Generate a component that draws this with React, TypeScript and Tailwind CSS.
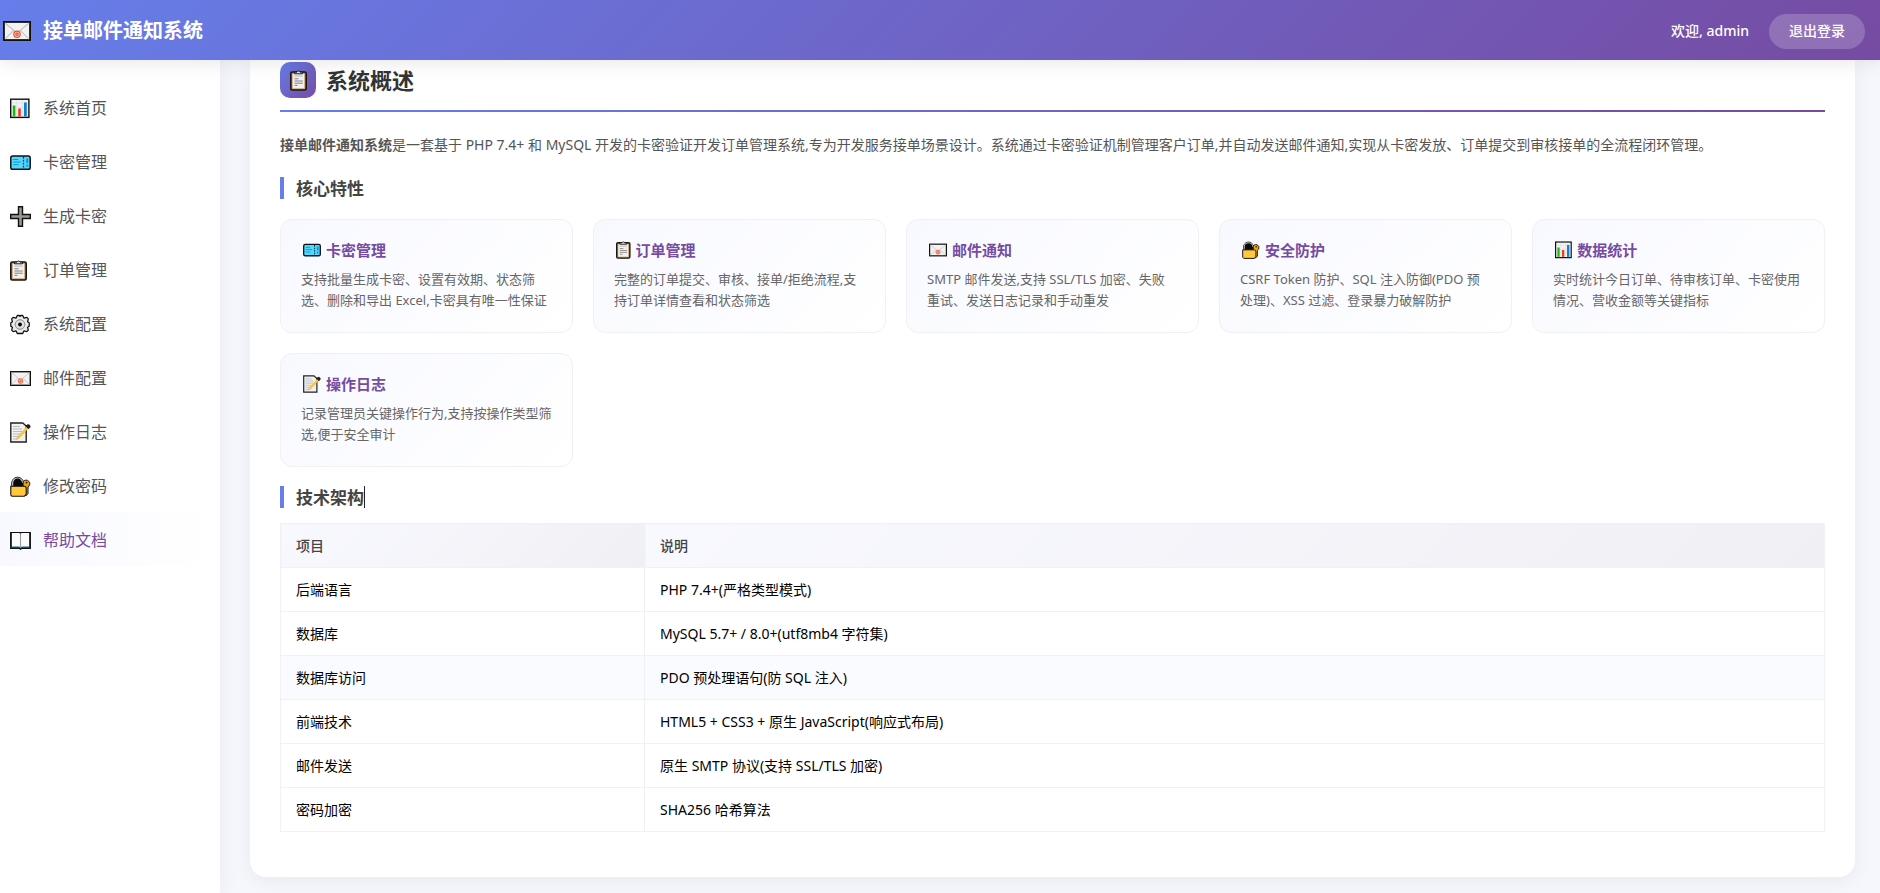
import type { ReactNode } from 'react'
import { clsx } from 'clsx'

type IconName = 'chart' | 'ticket' | 'plus' | 'clipboard' | 'gear' | 'mail' | 'memo' | 'lock' | 'book'

// every drawing is 21 units high, the width follows its own outline
const icons: Record<IconName, { width: number; art: ReactNode }> = {
  chart: {
    width: 20,
    art: (
      <>
        <rect x="0.7" y="1.2" width="18.2" height="18.2" fill="#f3f3f3" stroke="#111" strokeWidth="1.4" />
        <path d="M2 5h16M2 9.500h16M2 14h16M6.500 2v16M12.500 2v16" stroke="#dcdcdc" strokeWidth="0.6" />
        <rect x="2.800" y="7.500" width="2.600" height="11" fill="#16b916" />
        <rect x="8.200" y="10.500" width="2.600" height="8" fill="#f03a17" />
        <rect x="14" y="4.500" width="2.800" height="14" fill="#0f7fe0" />
      </>
    ),
  },
  ticket: {
    width: 21,
    art: (
      <>
        <rect x="0.8" y="4" width="19.400" height="13.200" rx="1.800" fill="#50d9ff" stroke="#111" strokeWidth="1.500" />
        <path d="M3.200 7.500h5M3.200 10h7.500M3.200 12.700h5.500" stroke="#1a8fd8" strokeWidth="1" />
        <path d="M13.500 4.800v12" stroke="#063a56" strokeWidth="1.300" strokeDasharray="1.800 1.200" />
        <path d="M17.200 6.500v4.500M17.200 12.500v2" stroke="#1a8fd8" strokeWidth="2" />
      </>
    ),
  },
  plus: {
    width: 21,
    art: <path d="M8.500.7h4v7.800h7.800v4h-7.800v7.800h-4v-7.800H.7v-4h7.800z" fill="#999990" stroke="#111" strokeWidth="1.400" />,
  },
  clipboard: {
    width: 17,
    art: (
      <>
        <rect x="0.8" y="2" width="15.400" height="18" rx="1.500" fill="#c18e55" stroke="#1a1612" strokeWidth="1.600" />
        <rect x="2.600" y="3.800" width="11.800" height="14.600" fill="#f0f0f0" />
        <path d="M4.500 3.800V2.200h2.300a1.800 1.800 0 0 1 3.400 0h2.300v1.600z" fill="#ddd" stroke="#111" strokeWidth="0.900" />
        <path d="M4.500 6h8" stroke="#b8b8b8" strokeWidth="1" />
        <path d="M4.500 8.800h4M4.500 11h8.300M4.500 13.200h8.300M4.500 15.400h3" stroke="#777" strokeWidth="0.900" />
      </>
    ),
  },
  gear: {
    width: 20,
    art: (
      <>
        <path
          d="M7.300 1.500h2l.7.800.7-.8h2l1.200 2.600 2.900-.7 1.500 1.500-.7 2.800 1.600 1v3.600l-1.600 1 .7 2.800-1.500 1.500-2.900-.7-1.200 2.600H7.300l-1.200-2.600-2.900.7-1.500-1.500.7-2.800-1.600-1V8.700l1.600-1-.7-2.800 1.500-1.500 2.900.7z"
          fill="#eaeaea"
          stroke="#111"
          strokeWidth="1.300"
          strokeLinejoin="round"
        />
        <circle cx="10" cy="10.500" r="4.800" fill="#e0e0e0" stroke="#8a8a8a" strokeWidth="1" />
        <circle cx="10" cy="10.500" r="1.900" fill="#000" />
      </>
    ),
  },
  mail: {
    width: 21,
    art: (
      <>
        <rect x="0.700" y="3.700" width="19.600" height="13.600" fill="#f2f2f2" stroke="#111" strokeWidth="1.400" />
        <path d="M1.500 4.500l9 7.500 9-7.500M1.500 16.600l6.500-6.500M19.500 16.600l-6.500-6.500" fill="none" stroke="#c4c4c4" strokeWidth="0.800" />
        <circle cx="10.500" cy="13" r="2.400" fill="#f7c4b8" stroke="#f04b2a" strokeWidth="0.800" />
        <circle cx="10.500" cy="13" r="0.900" fill="none" stroke="#f04b2a" strokeWidth="0.800" />
      </>
    ),
  },
  memo: {
    width: 21,
    art: (
      <>
        <path d="M.8 1h12l3.400 3v16H.8z" fill="#f1f1f1" stroke="#222" strokeWidth="1.400" />
        <path d="M3 4.500h7M3 7h9M3 9.500h9M3 12h7M3 14.500h5M3 17h4" stroke="#b5b5b5" strokeWidth="0.900" />
        <path d="M6.300 17.500l1.200-2.800L17 4.500l1.600 1.500-9.600 10.300z" fill="#ffc83d" stroke="#d9a032" strokeWidth="0.400" />
        <path d="M16 3.900c1-1.400 2.800-1.700 3.900-.5.700 1.200-.2 2.500-1.400 3.400z" fill="#2b1820" stroke="#111" strokeWidth="0.800" />
      </>
    ),
  },
  lock: {
    width: 21,
    art: (
      <>
        <path d="M1.800 11V7a5.700 5.700 0 0 1 11.600 0v4z" fill="#0a0a0a" stroke="#111" strokeWidth="1" />
        <path d="M2.600 10.300V7a5 5 0 0 1 10 0" fill="none" stroke="#b9b9b9" strokeWidth="1.200" />
        <path d="M13 5.800a3.700 3.700 0 1 1 5 5.200v6.500l-1.600 2h-3z" fill="#eba200" stroke="#111" strokeWidth="1" />
        <circle cx="16.500" cy="6.600" r="0.900" fill="#111" />
        <path d="M.8 10.300h13.400a2 2 0 0 1 2 2V18l-1.800 2.300H2L.8 19z" fill="#ffc83d" stroke="#111" strokeWidth="1.100" />
      </>
    ),
  },
  book: {
    width: 21,
    art: (
      <>
        <path d="M.7 2.700h19.600v15.600h-8.300l-1.500 1-1.500-1H.7z" fill="#16618f" stroke="#111" strokeWidth="1.300" />
        <path d="M2 3h7.200l1.300 1v13.500l-1.300-1H2zM19 3h-7.200l-1.300 1v13.500l1.300-1H19z" fill="#fbfbfb" />
        <path d="M10.500 4v13.500" stroke="#9a9a9a" strokeWidth="1.100" />
      </>
    ),
  },
}

function Icon({ name, className }: { name: IconName; className?: string }) {
  const { width, art } = icons[name]
  return (
    <svg viewBox={`0 0 ${width} 21`} className={clsx('w-auto shrink-0', className)} aria-hidden="true">
      {art}
    </svg>
  )
}

const menu: { icon: IconName; label: string }[] = [
  { icon: 'chart', label: '系统首页' },
  { icon: 'ticket', label: '卡密管理' },
  { icon: 'plus', label: '生成卡密' },
  { icon: 'clipboard', label: '订单管理' },
  { icon: 'gear', label: '系统配置' },
  { icon: 'mail', label: '邮件配置' },
  { icon: 'memo', label: '操作日志' },
  { icon: 'lock', label: '修改密码' },
  { icon: 'book', label: '帮助文档' },
]

const features: { icon: IconName; title: string; text: string }[] = [
  { icon: 'ticket', title: '卡密管理', text: '支持批量生成卡密、设置有效期、状态筛选、删除和导出 Excel,卡密具有唯一性保证' },
  { icon: 'clipboard', title: '订单管理', text: '完整的订单提交、审核、接单/拒绝流程,支持订单详情查看和状态筛选' },
  { icon: 'mail', title: '邮件通知', text: 'SMTP 邮件发送,支持 SSL/TLS 加密、失败\n重试、发送日志记录和手动重发' },
  { icon: 'lock', title: '安全防护', text: 'CSRF Token 防护、SQL 注入防御(PDO 预处理)、XSS 过滤、登录暴力破解防护' },
  { icon: 'chart', title: '数据统计', text: '实时统计今日订单、待审核订单、卡密使用情况、营收金额等关键指标' },
  { icon: 'memo', title: '操作日志', text: '记录管理员关键操作行为,支持按操作类型筛选,便于安全审计' },
]

const stack = [
  ['后端语言', 'PHP 7.4+(严格类型模式)'],
  ['数据库', 'MySQL 5.7+ / 8.0+(utf8mb4 字符集)'],
  ['数据库访问', 'PDO 预处理语句(防 SQL 注入)'],
  ['前端技术', 'HTML5 + CSS3 + 原生 JavaScript(响应式布局)'],
  ['邮件发送', '原生 SMTP 协议(支持 SSL/TLS 加密)'],
  ['密码加密', 'SHA256 哈希算法'],
]

function SubTitle({ children }: { children: ReactNode }) {
  return (
    <h3 className="flex h-[22px] items-start border-l-4 border-[#667eea] pl-3 text-[17px] leading-6 font-bold text-[#444]">
      {children}
    </h3>
  )
}

export default function App() {
  return (
    <div
      lang="zh-CN"
      className="flex min-h-screen flex-col bg-[#f5f7fc] font-['Noto_Sans','Noto_Sans_CJK_SC',sans-serif] text-sm text-[#333]"
    >
      <header className="sticky top-0 z-20 flex h-15 items-center justify-between bg-[linear-gradient(135deg,#667eea_0%,#764ba2_100%)] pr-[15px] pl-[3px] text-white shadow-[0_2px_20px_rgba(0,0,0,0.1)]">
        <div className="flex items-center gap-3 pt-0.5">
          <Icon name="mail" className="h-7" />
          <h1 className="text-xl font-bold">接单邮件通知系统</h1>
        </div>
        <div className="flex items-center gap-5 pt-0.5 font-medium">
          <span>欢迎, admin</span>
          <button type="button" className="h-[35px] cursor-pointer rounded-full bg-white/20 px-5">
            退出登录
          </button>
        </div>
      </header>

      <div className="flex flex-1">
        <aside className="z-10 w-[220px] shrink-0 bg-white pt-5 shadow-[2px_0_20px_rgba(0,0,0,0.05)]">
          <nav className="flex flex-col">
            {menu.map((item) => (
              <a
                key={item.label}
                href="#"
                className={clsx(
                  'flex h-[54px] items-center pt-0.5 pl-[10px] text-base',
                  item.icon === 'book'
                    ? 'bg-[linear-gradient(90deg,#f8f9ff_0%,#ffffff_100%)] text-[#764ba2]'
                    : 'text-[#555]',
                )}
              >
                <span className="w-[33px]">
                  <Icon name={item.icon} className="h-[21px]" />
                </span>
                {item.label}
              </a>
            ))}
          </nav>
        </aside>

        <main className="min-w-0 flex-1 pr-[25px] pb-4 pl-[30px]">
          <section className="rounded-b-2xl bg-white px-[30px] pt-0.5 pb-[45px] shadow-[0_4px_20px_rgba(0,0,0,0.06)]">
            <h2 className="flex items-center gap-2.5 border-b-2 pb-3 text-[22px] font-bold text-[#333] [border-image:linear-gradient(90deg,#667eea,#764ba2)_1]">
              <span className="flex size-9 items-center justify-center rounded-[10px] bg-[linear-gradient(135deg,#667eea,#764ba2)]">
                <Icon name="clipboard" className="h-[21px]" />
              </span>
              <span className="pt-0.5">系统概述</span>
            </h2>

            <p className="my-5 leading-[25px] text-[#555]">
              <strong className="font-semibold">接单邮件通知系统</strong>
              是一套基于 PHP 7.4+ 和 MySQL 开发的卡密验证开发订单管理系统,专为开发服务接单场景设计。系统通过卡密验证机制管理客户订单,并自动发送邮件通知,实现从卡密发放、订单提交到审核接单的全流程闭环管理。
            </p>

            <SubTitle>核心特性</SubTitle>
            <div className="mt-5 mb-[19px] grid grid-cols-[repeat(auto-fit,minmax(260px,1fr))] gap-5">
              {features.map((f) => (
                <article
                  key={f.title}
                  className="rounded-xl border border-[#f0f0f5] bg-[linear-gradient(135deg,#f8f9ff_0%,#ffffff_100%)] px-5 pt-[19px] pb-[21px]"
                >
                  <h4 className="mb-2 flex items-center gap-[5px] pl-0.5 text-[15px] leading-[22px] font-semibold text-[#764ba2]">
                    <Icon name={f.icon} className="h-[18px]" />
                    {f.title}
                  </h4>
                  <p className="text-[13px] leading-[21px] whitespace-pre-line text-[#666]">{f.text}</p>
                </article>
              ))}
            </div>

            <SubTitle>
              技术架构
              <span className="h-full w-px bg-[#222]" />
            </SubTitle>
            <table className="mt-[15px] w-full border-collapse text-left leading-5">
              <thead>
                <tr className="h-11">
                  {['项目', '说明'].map((label) => (
                    <th
                      key={label}
                      className="border border-[#f0f0f5] bg-[linear-gradient(135deg,#f8f9ff_0%,#f0eff4_100%)] px-[15px] font-medium text-[#444] first:w-[364px]"
                    >
                      {label}
                    </th>
                  ))}
                </tr>
              </thead>
              <tbody>
                {stack.map(([name, value]) => (
                  <tr key={name} className={clsx('h-11 text-black', name === '数据库访问' && 'bg-[#fafbff]')}>
                    <td className="border border-[#f0f0f5] px-[15px]">{name}</td>
                    <td className="border border-[#f0f0f5] px-[15px]">{value}</td>
                  </tr>
                ))}
              </tbody>
            </table>
          </section>
        </main>
      </div>
    </div>
  )
}
